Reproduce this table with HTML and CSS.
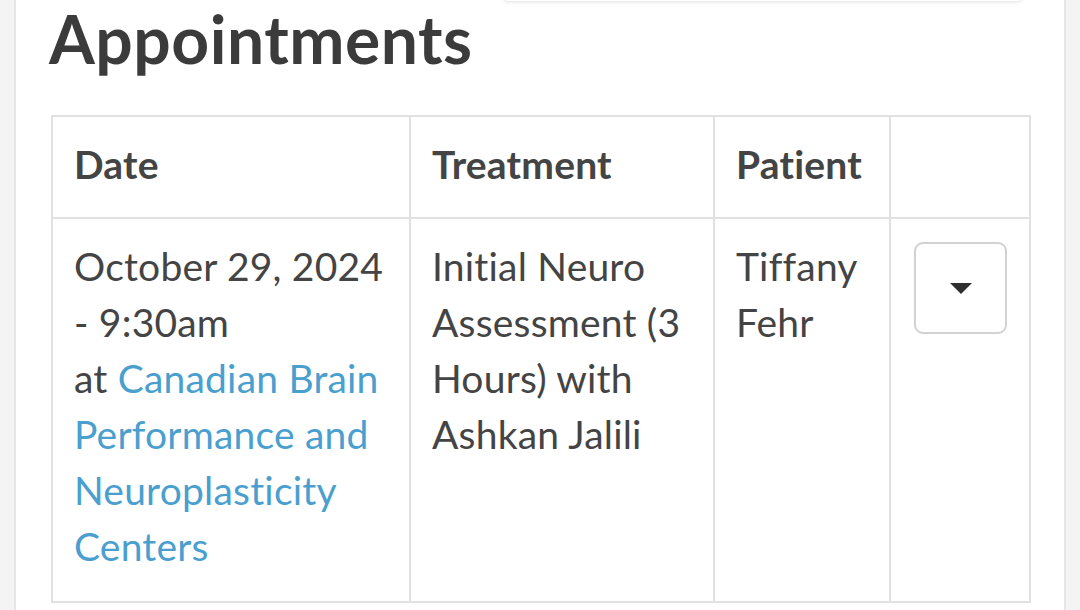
FILE: index.html
```html
<!DOCTYPE html>
<html lang="en">
<head>
<meta charset="utf-8">
<title>Appointments</title>
<link rel="stylesheet" href="styles.css">
</head>
<body>
<div class="topbar"></div>
<main class="card">
  <h1 class="title">Appointments</h1>
  <table class="appts">
    <colgroup>
      <col class="c-date">
      <col class="c-treat">
      <col class="c-patient">
      <col class="c-action">
    </colgroup>
    <thead>
      <tr>
        <th>Date</th>
        <th>Treatment</th>
        <th>Patient</th>
        <th></th>
      </tr>
    </thead>
    <tbody>
      <tr>
        <td>October 29, 2024<br>- 9:30am<br>at <a href="#">Canadian Brain Performance and Neuroplasticity Centers</a></td>
        <td>Initial Neuro Assessment (3 Hours) with Ashkan Jalili</td>
        <td>Tiffany Fehr</td>
        <td><button class="dd" type="button" aria-label="Actions"><span class="caret"></span></button></td>
      </tr>
    </tbody>
  </table>
</main>
</body>
</html>
```

FILE: styles.css
```css
html, body {
  margin: 0;
  padding: 0;
  background: #f4f4f4;
  height: 100%;
  overflow: hidden;
}

body {
  font-family: Lato, "Open Sans", Arial, sans-serif;
  color: #444;
  position: relative;
}

.topbar {
  position: absolute;
  left: 504px;
  top: -40px;
  width: 516px;
  height: 40px;
  background: #fff;
  border: 1px solid #ececec;
  border-radius: 4px;
  box-shadow: 0 1px 3px rgba(0,0,0,0.08);
  z-index: 2;
}

.card {
  margin: 0 14px;
  background: #fff;
  border-left: 2px solid #e6e6e6;
  border-right: 2px solid #e6e6e6;
  min-height: 100%;
  box-sizing: border-box;
  padding: 0 35px;
}

.title {
  margin: 0 0 0 -2px;
  padding-top: 6px;
  height: 115px;
  box-sizing: border-box;
  font-size: 66px;
  line-height: 66px;
  font-weight: 700;
  letter-spacing: 0.5px;
  color: #3b3b3b;
}

.appts {
  width: 978px;
  border-collapse: collapse;
  table-layout: fixed;
  font-size: 39px;
  letter-spacing: 0.2px;
  line-height: 56px;
}

.c-date { width: 358px; }
.c-treat { width: 304px; }
.c-patient { width: 176px; }
.c-action { width: 140px; }

.appts th,
.appts td {
  border: 2px solid #e1e1e1;
  text-align: left;
  vertical-align: top;
  padding: 19px 22px 25px 21px;
}

.appts th {
  font-weight: 700;
  color: #444;
}

.appts td {
  padding-bottom: 27px;
}

.appts a {
  color: #4b9fcf;
  text-decoration: none;
}

.dd {
  display: flex;
  align-items: center;
  justify-content: center;
  width: 93px;
  height: 92px;
  margin: 4px 0 0 2px;
  padding: 0;
  background: #fff;
  border: 2px solid #d2d2d2;
  border-radius: 9px;
}

.caret {
  width: 0;
  height: 0;
  border-left: 11px solid transparent;
  border-right: 11px solid transparent;
  border-top: 11px solid #2f2f2f;
}
```
